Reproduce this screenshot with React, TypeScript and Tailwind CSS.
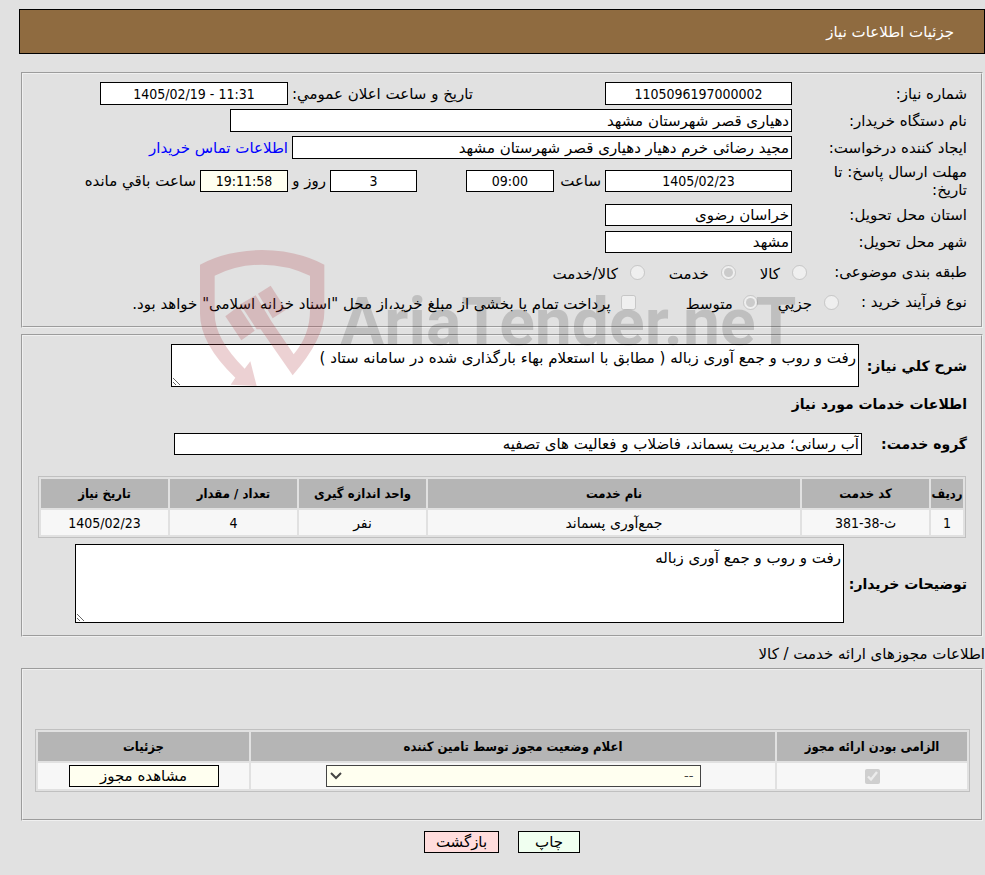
import type { InputHTMLAttributes, ReactNode } from 'react';
import { clsx } from 'clsx';

interface Service {
  row: number;
  code: string;
  name: string;
  unit: string;
  amount: number;
  date: string;
}

const services: Service[] = [
  { row: 1, code: 'ث-38-381', name: 'جمع‌آوری پسماند', unit: 'نفر', amount: 4, date: '1405/02/23' },
];

const subjects = ['کالا', 'خدمت', 'کالا/خدمت'];

interface FieldProps extends InputHTMLAttributes<HTMLInputElement> {
  tall?: boolean;
  numeric?: boolean;
  tinted?: boolean;
}

function Field({ tall, numeric, tinted, ...props }: FieldProps) {
  return (
    <input
      readOnly
      dir={numeric ? 'ltr' : 'rtl'}
      className={clsx(
        'block w-full min-w-0 border border-black px-0.5 outline-none',
        tall ? 'h-[23px]' : 'h-[22px]',
        numeric && "text-center font-['DejaVu_Sans_Condensed',sans-serif] text-[14px]",
        tinted ? 'bg-[#fffff0]' : 'bg-white'
      )}
      {...props}
    />
  );
}

function Panel({ className, children }: { className: string; children: ReactNode }) {
  return (
    <section className={clsx('mx-0.5 border-2 border-[#f0f0f0] [border-style:groove]', className)}>
      {children}
    </section>
  );
}

function Watermark() {
  return (
    <div dir="ltr" aria-hidden="true" className="pointer-events-none absolute left-[190px] top-[242px] flex">
      <svg viewBox="0 0 450 450" className="h-[150px] w-[150px] opacity-[0.22]" fill="#ad333b">
        <path d="M30 68Q110 25 216 24Q322 25 403 68V210Q403 290 308 400L212 262H200L151 187L197 160L244 238L311 337Q360 280 360 205V101Q290 68 216 68Q140 68 74 101V215Q74 290 164 380L181 358L200 432L122 428L136 407Q30 305 30 215Z" />
        <path d="M106 223L146 193L194 266L154 295Z" />
        <path d="M204 155L242 131L288 203L248 229Z" />
      </svg>
      <span className="pt-[36px] font-['Roboto','Liberation_Sans',sans-serif] text-[66px] leading-[90px] font-bold text-black/15">
        AriaTender.neT
      </span>
    </div>
  );
}

export default function App() {
  return (
    <div
      dir="rtl"
      className="relative min-h-screen bg-[#e1e1e1] pt-[9px] pl-[19px] font-['DejaVu_Sans',sans-serif] text-[15px] leading-[18px] text-black"
    >
      <header className="flex h-[45px] items-center border border-black bg-[#8f6b40] px-[30px]">
        <h1 className="text-white">جزئیات اطلاعات نیاز</h1>
      </header>

      <Panel className="mt-[18px] px-3.5 pt-2 pb-[13px]">
        <div className="grid grid-cols-[175px_187fr_132fr_185fr_188fr_63fr] items-center whitespace-nowrap">
          <label htmlFor="number">شماره نیاز:</label>
          <Field id="number" tall numeric defaultValue="1105096197000002" />
          <span />
          <label htmlFor="announce" className="min-w-0">تاريخ و ساعت اعلان عمومي:</label>
          <Field id="announce" tall numeric defaultValue="1405/02/19 - 11:31" />
        </div>
        <div className="mt-1 grid grid-cols-[175px_562fr_193fr] items-center">
          <label htmlFor="org">نام دستگاه خریدار:</label>
          <Field id="org" tall defaultValue="دهیاری قصر شهرستان مشهد" />
        </div>
        <div className="mt-1 grid grid-cols-[175px_500fr_255fr] items-center">
          <label htmlFor="creator">ایجاد کننده درخواست:</label>
          <Field id="creator" tall defaultValue="مجید رضائی خرم دهیار دهیاری قصر شهرستان مشهد" />
          <a href="#contact" className="mr-1 text-[#0000ff]">اطلاعات تماس خریدار</a>
        </div>
        <div className="mt-1 grid grid-cols-[175px_187fr_51fr_88fr_49fr_87fr_42fr_88fr_163fr] items-center whitespace-nowrap">
          <label htmlFor="deadline" className="w-[140px] whitespace-normal">مهلت ارسال پاسخ: تا تاریخ:</label>
          <Field id="deadline" numeric defaultValue="1405/02/23" />
          <label htmlFor="hour" className="min-w-0 pr-1">ساعت</label>
          <Field id="hour" numeric defaultValue="09:00" />
          <span />
          <Field id="days" numeric defaultValue="3" />
          <label htmlFor="days" className="min-w-0 pr-1">روز و</label>
          <Field id="left" numeric tinted defaultValue="19:11:58" />
          <label htmlFor="left" className="min-w-0 pr-1">ساعت باقي مانده</label>
        </div>
        <div className="mt-[5px] grid grid-cols-[175px_187fr_568fr] items-center">
          <label htmlFor="province">استان محل تحویل:</label>
          <Field id="province" defaultValue="خراسان رضوی" />
        </div>
        <div className="mt-[5px] grid grid-cols-[175px_187fr_568fr] items-center">
          <label htmlFor="city">شهر محل تحویل:</label>
          <Field id="city" defaultValue="مشهد" />
        </div>
        <div className="mt-2 flex h-[22px] items-center whitespace-nowrap">
          <span className="w-[160px]">طبقه بندی موضوعی:</span>
          <div className="flex gap-6">
            {subjects.map((subject) => (
              <label key={subject} className="flex items-center gap-3">
                <input type="radio" name="subject" disabled defaultChecked={subject === 'خدمت'} className="size-[15px]" />
                <span className="pt-1">{subject}</span>
              </label>
            ))}
          </div>
        </div>
        <div className="mt-2 flex h-[22px] items-center whitespace-nowrap">
          <span className="w-[128px]">نوع فرآیند خرید :</span>
          <label className="ml-5 flex items-center gap-3">
            <input type="radio" name="process" disabled className="size-[15px]" />
            <span className="pt-1">جزیي</span>
          </label>
          <label className="flex items-center gap-2.5">
            <input type="radio" name="process" disabled defaultChecked className="size-[15px]" />
            <span className="pt-1">متوسط</span>
          </label>
          <label className="mr-[50px] flex items-center gap-2.5">
            <input type="checkbox" disabled className="size-[15px]" />
            <span className="pt-1">پرداخت تمام یا بخشی از مبلغ خرید،از محل "اسناد خزانه اسلامی" خواهد بود.</span>
          </label>
        </div>
      </Panel>

      <Panel className="mt-1.5 px-3.5 pt-2 pb-3">
        <div className="grid grid-cols-[108px_688fr_134fr] items-center">
          <label htmlFor="summary" className="text-[14px] font-bold whitespace-nowrap">شرح كلي نیاز:</label>
          <textarea
            id="summary"
            readOnly
            className="block h-[43px] w-full resize border border-black bg-white px-0.5 pt-1 outline-none"
            defaultValue="رفت و روب و جمع آوری زباله ( مطابق با استعلام بهاء بارگذاری شده در سامانه ستاد )"
          />
        </div>
        <h2 className="mt-2 text-[14px] font-bold">اطلاعات خدمات مورد نیاز</h2>
        <div className="mt-5 grid grid-cols-[105px_688fr_137fr] items-center">
          <label htmlFor="group" className="text-[14px] font-bold">گروه خدمت:</label>
          <Field id="group" defaultValue="آب رسانی؛ مدیریت پسماند، فاضلاب و فعالیت های تصفیه" />
        </div>
        <div className="mx-px mt-[21px]">
          <table className="w-full table-fixed border-separate border-spacing-0.5 border border-[#c0c0c0] text-center">
            <colgroup>
              <col className="w-8" />
              <col className="w-[127px]" />
              <col />
              <col className="w-[127px]" />
              <col className="w-[127px]" />
              <col className="w-[127px]" />
            </colgroup>
            <thead>
              <tr className="h-[29px] bg-[#b5b5b5] font-['DejaVu_Sans_Condensed',sans-serif] text-[13px] whitespace-nowrap">
                <th>ردیف</th>
                <th>کد خدمت</th>
                <th>نام خدمت</th>
                <th>واحد اندازه گیری</th>
                <th>تعداد / مقدار</th>
                <th>تاریخ نیاز</th>
              </tr>
            </thead>
            <tbody>
              {services.map((service) => (
                <tr key={service.row} className="h-[25px] bg-[#f7f7f7] font-['DejaVu_Sans_Condensed',sans-serif] text-[14px]">
                  <td>{service.row}</td>
                  <td>{service.code}</td>
                  <td className="font-['DejaVu_Sans',sans-serif]">{service.name}</td>
                  <td className="font-['DejaVu_Sans',sans-serif]">{service.unit}</td>
                  <td>{service.amount}</td>
                  <td>{service.date}</td>
                </tr>
              ))}
            </tbody>
          </table>
        </div>
        <div className="mt-1.5 grid grid-cols-[123px_769fr_38fr] items-center">
          <label htmlFor="notes" className="text-[14px] font-bold whitespace-nowrap">توضیحات خریدار:</label>
          <textarea
            id="notes"
            readOnly
            className="block h-[79px] w-full resize border border-black bg-white px-0.5 pt-1 outline-none"
            defaultValue="رفت و روب و جمع آوری زباله"
          />
        </div>
      </Panel>

      <h2 className="mt-2">اطلاعات مجوزهای ارائه خدمت / کالا</h2>
      <Panel className="mt-[5px] pt-[59px] pr-[11px] pb-[27px] pl-3">
        <table className="w-full table-fixed border-separate border-spacing-0.5 border border-[#c0c0c0] text-center">
          <colgroup>
            <col className="w-[190px]" />
            <col />
            <col className="w-[211px]" />
          </colgroup>
          <thead>
            <tr className="h-[29px] bg-[#b5b5b5] font-['DejaVu_Sans_Condensed',sans-serif] text-[13px]">
              <th>الزامی بودن ارائه مجوز</th>
              <th id="status">اعلام وضعیت مجوز توسط تامین کننده</th>
              <th>جزئیات</th>
            </tr>
          </thead>
          <tbody>
            <tr className="h-[26px] bg-[#f7f7f7]">
              <td>
                <input type="checkbox" aria-label="الزامی بودن ارائه مجوز" disabled defaultChecked className="mx-auto block size-[15px]" />
              </td>
              <td>
                <div className="relative mx-auto w-[375px] max-w-full">
                  <select
                    aria-labelledby="status"
                    disabled
                    className="block h-[22px] w-full appearance-none border border-[#444444] bg-[#fffff0] px-1.5 text-[13px] text-[#444444]"
                  >
                    <option>--</option>
                  </select>
                  <svg
                    viewBox="0 0 12 8"
                    className="pointer-events-none absolute top-[7px] left-1 h-2 w-3"
                    fill="none"
                    stroke="#444444"
                    strokeWidth="2"
                  >
                    <path d="M1 1L6 6L11 1" />
                  </svg>
                </div>
              </td>
              <td>
                <button type="button" className="mx-auto block h-[22px] w-[150px] border border-black bg-[#fffff0]">
                  مشاهده مجوز
                </button>
              </td>
            </tr>
          </tbody>
        </table>
      </Panel>

      <div className="mt-2.5 flex justify-center gap-[19px] pb-[22px]">
        <button type="button" className="h-[22px] w-[62px] border border-black bg-[#f0fff0]">چاپ</button>
        <button type="button" className="h-[22px] w-[75px] border border-black bg-[#ffdddd]">بازگشت</button>
      </div>
      <Watermark />
    </div>
  );
}
